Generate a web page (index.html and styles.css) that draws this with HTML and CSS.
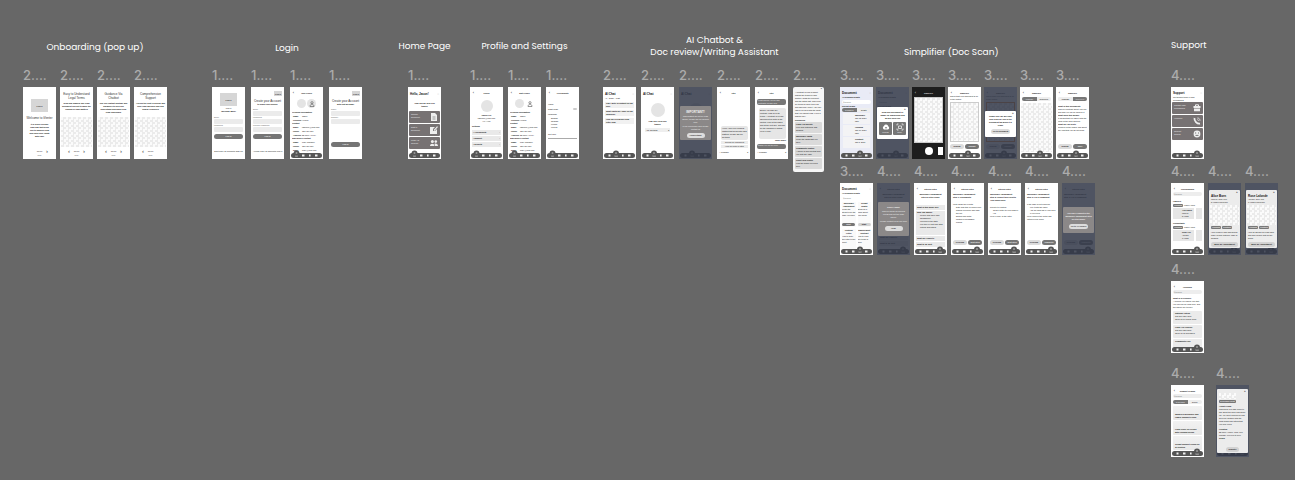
FILE: index.html
```html
<!DOCTYPE html>
<html lang="en">
<head>
<meta charset="utf-8">
<meta name="viewport" content="width=device-width, initial-scale=1">
<title>Wireframe board</title>
<link rel="stylesheet" href="styles.css">
</head>
<body>
<svg class="defs" aria-hidden="true">
  <symbol id="pill" viewBox="0 0 31 8"><rect y="3" width="31" height="5" rx="2.5" fill="#555"/><g fill="#eee"><rect x="4.5" y="4.5" width="2" height="2"/><rect x="11" y="4.5" width="2.5" height="2"/><rect x="18" y="4.5" width="1.6" height="2"/><rect x="24" y="4.5" width="2.5" height="2"/></g></symbol>
  <symbol id="tabs1" viewBox="0 0 31 8"><use href="#pill" width="31" height="8"/><circle cx="5.5" cy="3.5" r="3" fill="#555"/><circle cx="5.5" cy="3" r="1" fill="#999"/><path d="M4 6h3" stroke="#aaa" stroke-width=".7"/></symbol>
  <symbol id="tabs2" viewBox="0 0 31 8"><use href="#pill" width="31" height="8"/><circle cx="12" cy="3.5" r="3" fill="#555"/><circle cx="12" cy="3" r="1" fill="#999"/><path d="M10 6h4" stroke="#aaa" stroke-width=".7"/></symbol>
  <symbol id="tabs3" viewBox="0 0 31 8"><use href="#pill" width="31" height="8"/><circle cx="19" cy="3.5" r="3" fill="#555"/><circle cx="19" cy="3" r="1" fill="#999"/><path d="M17 6h4" stroke="#aaa" stroke-width=".7"/></symbol>
  <symbol id="tabs4" viewBox="0 0 31 8"><use href="#pill" width="31" height="8"/><circle cx="25" cy="3.5" r="3" fill="#555"/><circle cx="25" cy="3" r="1" fill="#999"/><path d="M23 6h4" stroke="#aaa" stroke-width=".7"/></symbol>
  <symbol id="doc" viewBox="0 0 8 8"><path d="M1 0h4l2 2v6H1z" fill="#eee"/><path d="M2.5 4h3M2.5 6h3" stroke="#777" stroke-width=".7"/></symbol>
  <symbol id="edit" viewBox="0 0 8 8"><path d="M0 1h5L3 3v2h2l2-2v5H0z" fill="#eee"/><path d="M4 4.5 7.5.7" stroke="#eee" stroke-width="1.2"/></symbol>
  <symbol id="people" viewBox="0 0 8 8"><g fill="#eee"><circle cx="2.4" cy="2.6" r="1.5"/><circle cx="5.8" cy="2.6" r="1.3"/><path d="M0 7c0-3 4.5-3 4.5 0zM5 7c0-1-.3-1.6-.7-2C6 4 8 5 8 7z"/></g></symbol>
  <symbol id="case" viewBox="0 0 8 8"><path d="M2.5 2V.8h3V2" fill="none" stroke="#eee"/><path d="M.5 2h7v2h-7zM1 4.6h6v2.6H1z" fill="#eee"/></symbol>
  <symbol id="phone" viewBox="0 0 8 8"><path d="M1.5 1C1 4 4 7 7 6.6" fill="none" stroke="#eee" stroke-width="1.8"/><path d="M4.3 1C6 1 7 2 7 3.8M4.3 2.6c.8 0 1.2.5 1.2 1.2" fill="none" stroke="#eee" stroke-width=".8"/></symbol>
  <symbol id="globe" viewBox="0 0 8 8"><circle cx="4" cy="4" r="3.4" fill="#eee"/><path d="M2 3h1.2M5 3h1M2.5 5.4h3" stroke="#777"/></symbol>
  <symbol id="cloud" viewBox="0 0 8 8"><path d="M2 6.5a2 2 0 0 1 0-3.6 2.2 2.2 0 0 1 4.2.3A1.8 1.8 0 0 1 6 6.5z" fill="#fff"/><path d="M4 6V4M3 5l1-1 1 1" stroke="#777" stroke-width=".6" fill="none"/></symbol>
  <symbol id="scan" viewBox="0 0 8 8"><path d="M1 2.5V1h1.5M5.5 1H7v1.5M7 5.5V7H5.5M2.5 7H1V5.5M2.5 3h3v2.5h-3z" fill="none" stroke="#eee" stroke-width=".8"/></symbol>
  <symbol id="user" viewBox="0 0 6 6"><circle cx="3" cy="1.7" r="1.1" fill="none" stroke="#555" stroke-width=".6"/><path d="M1 5.5c0-3 4-3 4 0z" fill="none" stroke="#555" stroke-width=".6"/></symbol>
</svg>

<main class="canvas">

<section class="flow onboarding">
  <h2>Onboarding (pop up)</h2>
  <div class="row gap4">
    <article class="node"><h3>2....</h3><div class="shot">
      <div class="logo big mt12">LOGO</div><p class="h thin c mt4 nowrap">Welcome to iVenter</p>
      <p class="t b c mt3 inset">It is a user friendly legal app that helps you to simplify legal and learn your rights with ease</p>
      <p class="pager"><span></span><span>••••</span><span>›</span></p><p class="t c grey">Skip</p></div></article>
    <article class="node"><h3>2....</h3><div class="shot">
      <p class="h thin c mt5">Easy to Understand Legal Terms</p><p class="t b c mt2">Scan and simplify any legal document you get to make the reading of legal matters</p>
      <div class="check h30 bottom"></div><p class="pager tight"><span>‹</span><span>••••</span><span>›</span></p><p class="t c grey">Skip</p></div></article>
    <article class="node"><h3>2....</h3><div class="shot">
      <p class="h thin c mt5">Guidance Via<br>Chatbot</p><p class="t b c mt2">Use our chatbot anytime and anywhere to help you understand and guide your legal challenges</p>
      <div class="check h30 bottom"></div><p class="pager tight"><span>‹</span><span>••••</span><span>›</span></p><p class="t c grey">Skip</p></div></article>
    <article class="node"><h3>2....</h3><div class="shot">
      <p class="h thin c mt5">Comprehensive Support</p><p class="t b c mt2">Access the best in person and your legal advisors and find nearby resources</p>
      <div class="check h30 bottom"></div><p class="pager tight"><span>‹</span><span>••••</span><span></span></p><p class="t c grey">Skip</p></div></article>
  </div>
</section>

<section class="flow login">
  <h2>Login</h2>
  <div class="row gap6">
    <article class="node"><h3>1....</h3><div class="shot">
      <div class="logo big mt6">LOGO</div><p class="t c mt1">Log In</p><p class="t c b">Welcome Back!</p>
      <label class="t grey mt3">Email<input class="field" type="text"></label><label class="t grey">Password<input class="field" type="password"></label>
      <button class="btn dark wide mt2">Log In</button><p class="t c nowrap bottom mb6">Don't have an account? Sign Up</p></div></article>
    <article class="node"><h3>1....</h3><div class="shot">
      <div class="logo small mt4">LOGO</div><p class="h thin c mt3 nowrap">Create your Account</p><p class="t c b">to begin your journey</p>
      <label class="t grey mt2">Email<input class="field" type="text"></label><label class="t grey">Password<input class="field" type="password"></label><label class="t grey">Confirm Password<input class="field" type="password"></label>
      <button class="btn dark wide mt2">Log In</button><p class="t c nowrap bottom mb6">Already have an account? Log In</p></div></article>
    <article class="node"><h3>1....</h3><div class="shot">
      <p class="bar"><span>‹</span><b>Your Profile</b></p>
      <div class="avatars"><i class="disc"></i><i class="disc"><svg class="ic6"><use href="#user"/></svg></i></div>
      <dl class="info"><dt>Personal Information</dt><dd><b>Name</b>Jason</dd><dd><b>Pronoun</b>He/him</dd><dt>Contact</dt><dd><b>Email</b>jasonlee@mail.com</dd><dd><b>Phone</b>123-456-789</dd><dd><b>Address</b>22 Park Ave NY</dd><dt>Emergency Contact</dt><dd><b>Name</b>Mary Johnson</dd><dd><b>Phone</b>123-456-789</dd><dd><b>Email</b>mary@mail.com</dd></dl>
      <svg class="tabs"><use href="#tabs1"/></svg></div></article>
    <article class="node"><h3>1....</h3><div class="shot">
      <div class="logo small mt4">LOGO</div><p class="h thin c mt3 nowrap">Create your Account</p><p class="t c b">with just an Email</p>
      <label class="t grey mt2">Name<input class="field" type="text"></label><label class="t grey">Number<input class="field" type="text"></label>
      <button class="btn dark wide mt18">Log In</button></div></article>
  </div>
</section>

<section class="flow home">
  <h2>Home Page</h2>
  <div class="row">
    <article class="node"><h3>1....</h3><div class="shot">
      <p class="top"><b>Hello, Jason!</b><span>○</span></p><p class="t c b mt5 inset">How can we help you today?</p>
      <div class="tiles"><button class="tile"><span>Simplify<br>document</span><svg class="ic8"><use href="#doc"/></svg></button><button class="tile"><span>Draft a<br>document</span><svg class="ic8"><use href="#edit"/></svg></button><button class="tile"><span>Legal Aid<br>Support</span><svg class="ic8"><use href="#people"/></svg></button></div>
      <svg class="tabs"><use href="#tabs1"/></svg></div></article>
  </div>
</section>

<section class="flow profile">
  <h2>Profile and Settings</h2>
  <div class="row gap5">
    <article class="node"><h3>1....</h3><div class="shot">
      <p class="bar"><span>‹</span><b>Profile</b></p><i class="disc large mt5"></i><p class="t c b mt2">Jason Lee</p><p class="t c">jasonlee@mail.com<br>He / Him</p>
      <p class="t b mt2">Settings</p><button class="item mt2">▪ Accessibility<span>›</span></button><button class="item">▪ Support<span>›</span></button><button class="item">▪ Security<span>›</span></button>
      <svg class="tabs"><use href="#tabs1"/></svg></div></article>
    <article class="node"><h3>1....</h3><div class="shot">
      <p class="bar"><span>‹</span><b>Edit Profile</b></p>
      <div class="avatars"><i class="disc"></i><i class="disc clear"><svg class="ic6"><use href="#user"/></svg></i></div>
      <dl class="info"><dt>Personal Information</dt><dd><b>Name</b>Jason</dd><dd><b>Pronoun</b>He/him</dd><dt>Contact</dt><dd><b>Email</b>jasonlee@mail.com</dd><dd><b>Phone</b>123-456-789</dd><dd><b>Address</b>22 Park Ave NY</dd><dt>Emergency Contact</dt><dd><b>Name</b>Mary Johnson</dd><dd><b>Phone</b>123-456-789</dd><dd><b>Email</b>mary@mail.com</dd></dl>
      <svg class="tabs"><use href="#tabs1"/></svg></div></article>
    <article class="node"><h3>1....</h3><div class="shot">
      <p class="bar"><span>‹</span><b>Accessibility</b></p><p class="t mt8">Visual</p><p class="t split mt2">Night mode<i class="toggle"></i></p>
      <p class="t mt2">Language</p><ul class="t list mt1"><li>English</li><li>Spanish</li><li>French</li><li>Korean</li></ul><p class="t mt4">Text Size</p><i class="slide"></i>
      <svg class="tabs"><use href="#tabs1"/></svg></div></article>
  </div>
</section>

<section class="flow chat">
  <h2>AI Chatbot &amp;<br>Doc review/Writing Assistant</h2>
  <div class="row gap5">
    <article class="node"><h3>2....</h3><div class="shot">
      <p class="top"><b>AI Chat</b><span>○</span></p><p class="t nowrap">All&nbsp;&nbsp; Today &nbsp; Past</p>
      <div class="stack mt2"><p class="note">Can I write a contract for my job?</p><p class="note">What rights do I have for my landlord?</p><p class="note">Help me review my legal letter now</p></div>
      <svg class="tabs"><use href="#tabs2"/></svg></div></article>
    <article class="node"><h3>2....</h3><div class="shot">
      <p class="top"><b>AI Chat</b><span>○</span></p><i class="disc huge mt6"></i><p class="t c b mt3 inset">How can I help you today?</p><p class="ask mt2">Ask anything<span>◂</span></p>
      <svg class="tabs"><use href="#tabs2"/></svg></div></article>
    <article class="node"><h3>2....</h3><div class="shot dim">
      <p class="top"><b>AI Chat</b><span>○</span></p><i class="disc huge mt6"></i>
      <svg class="tabs"><use href="#tabs2"/></svg>
      <div class="modal grey-modal m34"><p class="h c">IMPORTANT!</p><p class="t c mt1">This chatbot will not be legal advice, please use for general help</p><p class="t c mt1">If you need more help please contact us</p><button class="btn pale mt2">I understand</button></div></div></article>
    <article class="node"><h3>2....</h3><div class="shot">
      <p class="bar"><span>‹</span><b>Title</b></p>
      <div class="bubble bottom">Hello! I am your personal chatbot that helps with legal matters. Please ask me anything</div><p class="hint">Review my document</p><p class="hint">Help me write a letter</p>
      <p class="send"><span>+ Message</span><span>◂</span></p></div></article>
    <article class="node"><h3>2....</h3><div class="shot">
      <p class="bar"><span>‹</span><b>Title</b></p><p class="said mt4">What should I do for this contract? Please help</p>
      <div class="bubble h31 mt3">Before you sign any contract, read all of its terms. A contract is a legal agreement for both of the parties. Look at the dates and at the rent due, and ask for the changes in writing. Keep a copy</div>
      <p class="t r b">Copy Share</p><p class="said mt2">Thank you for the help</p><p class="send bottom"><span>+ Message</span><span>◂</span></p></div></article>
    <article class="node"><h3>2....</h3><div class="shot tall">
      <p class="t r b">●</p><p class="t mt1">A contract review is about finding the terms of each section. Read the payment and the dates first. Then look for terms on how it will end, and who may end it. Ask your lawyer for help with the parts that you cannot read. Keep a signed copy</p>
      <p class="t b mt1">Resources</p><div class="stack tight-stack"><p class="card"><b>Legal Aid Society</b><br>Free help with work and housing</p><p class="card"><b>Workplace rights</b><br>Learn the rights that you have</p><p class="card"><b>Community Justice</b><br>A group of lawyers that help you with any case</p><p class="card"><b>Court Help Center</b><br>Find the forms you need here</p></div></div></article>
  </div>
</section>

<section class="flow simplifier">
  <h2>Simplifier (Doc Scan)</h2>
  <div class="row gap3">
    <article class="node"><h3>3....</h3><div class="shot blue">
      <p class="top low"><b>Document</b><span>○</span></p><p class="t b nowrap">All Scanned Drafts</p><p class="search">⚲ Search</p><p class="t b">Recent Scans</p><p class="seg"><b>Scanned</b><span>Drafts</span></p>
      <div class="stack files"><p class="file"><b>Workplace</b><br>Jan 12, 2024<br>PDF</p><p class="file"><b>Housing</b><br>Jan 10, 2024<br>PDF</p><p class="file"><b>Contract</b><br>Jan 8, 2024</p></div>
      <svg class="tabs"><use href="#tabs3"/></svg></div></article>
    <article class="node"><h3>3....</h3><div class="shot dim">
      <p class="top low"><b>Document</b><span>○</span></p><p class="t b nowrap">All Scanned Drafts</p><p class="search">⚲ Search</p><p class="t b">Recent Scans</p>
      <svg class="tabs"><use href="#tabs3"/></svg>
      <div class="modal m32"><p class="t r">⊗</p><p class="t c b">Scan any document or image for simplifying and we will help you</p><div class="pair"><button class="pick"><svg class="ic8"><use href="#cloud"/></svg>Upload</button><button class="pick"><svg class="ic8"><use href="#scan"/></svg>Scan</button></div></div></div></article>
    <article class="node"><h3>3....</h3><div class="shot camera">
      <p class="bar"><span>‹</span><b>Simplifier</b></p><div class="check framed h46 mt2"></div><div class="shutter"><i></i><i class="round"></i><i class="thumb"></i></div></div></article>
    <article class="node"><h3>3....</h3><div class="shot">
      <p class="bar"><span>‹</span><b>Simplifier</b></p><p class="t">Check that your document is all in the picture</p><div class="check framed h40 mt1"></div><div class="pair mt2"><button class="btn light">Rescan</button><button class="btn dark">Submit</button></div>
      <svg class="tabs"><use href="#tabs3"/></svg></div></article>
    <article class="node"><h3>3....</h3><div class="shot dim">
      <p class="bar"><span>‹</span><b>Simplifier</b></p><p class="t">Check that your document is all in the picture</p><div class="check framed orange h40 mt1"></div><div class="pair mt2"><button class="btn light">Rescan</button><button class="btn dark">Submit</button></div>
      <svg class="tabs"><use href="#tabs3"/></svg>
      <div class="modal m26"><p class="t r">⊗</p><p class="t c b">Thank you! We will save your scan for you in the Document tab when it is ready</p><button class="btn light mt2">Go to Document</button></div></div></article>
    <article class="node"><h3>3....</h3><div class="shot">
      <p class="bar"><span>‹</span><b>Simplifier</b></p><p class="seg mt2"><b>Original</b><span>Simplified</span></p><div class="check h49 mt2"></div>
      <svg class="tabs"><use href="#tabs3"/></svg></div></article>
    <article class="node"><h3>3....</h3><div class="shot">
      <p class="bar"><span>‹</span><b>Simplifier</b></p><p class="seg flip mt2"><b>Original</b><span>Simplified</span></p>
      <div class="t text-body mt4"><b>What is this document?</b><br>This is a contract about your job and how you will be paid for it.<br><b>What does this mean?</b><br>It means that you agree with the rules of the work and pay.<br><b>What do I do next?</b><br>Read all of the pages, ask about any part that you do not know</div><div class="pair foot"><button class="btn light">Rescan</button><button class="btn dark">Save</button></div>
      <svg class="tabs"><use href="#tabs3"/></svg></div></article>
  </div>
  <div class="row gap4 second">
    <article class="node"><h3>3....</h3><div class="shot">
      <p class="top low"><b>Document</b><span>○</span></p><p class="t b nowrap">All Scanned Drafts</p><p class="search">⚲ Search</p>
      <div class="grid"><div class="t c"><b>Workplace Harassment</b><p class="l">Learn the steps to file the case you have</p><button class="btn dark mini">Start</button></div><div class="t c"><b>Tenant<br>Rights</b><p class="l">Steps for a claim about your home</p><button class="btn mid mini">Start</button></div><div class="t c"><b>Custody<br>Letter</b><p class="l">How to write the letter to the court</p></div><div class="t c"><b>Employment Contract</b><p class="l">How to read the terms of work</p></div></div>
      <svg class="tabs"><use href="#tabs3"/></svg></div></article>
    <article class="node"><h3>4....</h3><div class="shot dim">
      <p class="bar"><span>‹</span><b>Step-by-Step</b></p><p class="t b c mt2">Workplace Harassment<br>Step by Step Guide</p><p class="item mt36">What do I expect?</p><p class="item">What to do next</p>
      <svg class="tabs"><use href="#tabs4"/></svg>
      <div class="modal grey-modal m34"><p class="t b c mt3">DISCLAIMER</p><p class="t c mt1">This is a guide for general needs and not the legal advice</p><p class="t c mt1">Please contact us for any help</p><button class="btn pale mt3">Okay</button></div></div></article>
    <article class="node"><h3>4....</h3><div class="shot">
      <p class="bar"><span>‹</span><b>Step-by-Step</b></p><p class="t b c mt2">Workplace Harassment<br>Step by Step Guide</p><p class="item mt6">What is this guide for?</p>
      <div class="panel t"><b>Who can apply?</b><ul class="list"><li>People who have had harassment</li><li>Workers in the state</li><li>Full time or part time staff</li><li>Interns and others</li></ul></div><p class="item">What do I expect?</p><p class="item">What to do next</p>
      <svg class="tabs"><use href="#tabs4"/></svg></div></article>
    <article class="node"><h3>4....</h3><div class="shot">
      <p class="bar"><span>‹</span><b>Step-by-Step</b></p><p class="t b mt2">Workplace Harassment<br>Step 1: Documents</p><div class="t mt4">Write down the events:<ul class="list"><li>Date and time of each event</li><li>Names of people who saw the act</li><li>Emails and notes</li><li>Photos or messages</li><li>Places</li></ul></div><div class="pair foot"><button class="btn light">Previous</button><button class="btn dark">Next Step</button></div>
      <svg class="tabs"><use href="#tabs4"/></svg></div></article>
    <article class="node"><h3>4....</h3><div class="shot">
      <p class="bar"><span>‹</span><b>Step-by-Step</b></p><p class="t b mt2">Workplace Harassment<br>Step 2: Report this event to Your Supervisor</p><div class="t mt4">Report it in writing:<ul class="list"><li>Send a letter to your boss or HR</li></ul>Keep a copy of the letter</div><div class="pair foot"><button class="btn light">Previous</button><button class="btn dark">Next Step</button></div>
      <svg class="tabs"><use href="#tabs4"/></svg></div></article>
    <article class="node"><h3>4....</h3><div class="shot">
      <p class="bar"><span>‹</span><b>Step-by-Step</b></p><p class="t b mt2">Workplace Harassment<br>Step 3: File a complaint</p><div class="t mt4">If the case is not resolved:<ul class="list"><li>File it with the office</li><li>Ask for legal aid in your area if you need</li></ul>Keep each of the notes and letters in one place</div><div class="pair foot"><button class="btn light">Previous</button><button class="btn dark">Complete</button></div>
      <svg class="tabs"><use href="#tabs4"/></svg></div></article>
    <article class="node"><h3>4....</h3><div class="shot dim">
      <p class="bar"><span>‹</span><b>Step-by-Step</b></p><p class="t b mt2">Workplace Harassment<br>Step 3: File a complaint</p><div class="pair foot"><button class="btn light">Previous</button><button class="btn dark">Complete</button></div>
      <svg class="tabs"><use href="#tabs4"/></svg>
      <div class="modal grey-modal m26"><p class="t c b mt4">You have completed the workplace harassment step by step guide!</p><button class="btn pale mt3">Go to All Guides</button></div></div></article>
  </div>
</section>

<section class="flow support">
  <h2>Support</h2>
  <div class="row">
    <article class="node"><h3>4....</h3><div class="shot">
      <p class="top low"><b>Support</b><span>○</span></p><p class="t">Get support from a legal professional</p>
      <div class="tiles close"><button class="tile"><span>Contact legal<br>Professional</span><svg class="ic8"><use href="#case"/></svg></button><button class="tile"><span>Helplines</span><svg class="ic8"><use href="#phone"/></svg></button><button class="tile"><span>Support<br>Groups</span><svg class="ic8"><use href="#globe"/></svg></button></div>
      <svg class="tabs"><use href="#tabs4"/></svg></div></article>
  </div>
  <div class="row gap4 second">
    <article class="node"><h3>4....</h3><div class="shot">
      <p class="bar"><span>‹</span><b>Professionals</b></p><p class="search line mt1">⚲ Search</p><p class="t b mt3">Lawyers</p><p class="chips"><b>Housing</b><span>Family Work</span></p><div class="scroll"><p class="pro"><b>Alice Born</b><br>Lawyer<br>5 years</p><p class="pro"></p></div>
      <p class="t b mt3">Consultants</p><p class="chips"><b>Housing</b><span>Family Work</span></p><div class="scroll"><p class="pro"><b>Rose Lee</b><br>Adviser<br>3 years</p><p class="pro"></p></div>
      <svg class="tabs"><use href="#tabs4"/></svg></div></article>
    <article class="node"><h3>4....</h3><div class="shot dim"><svg class="tabs"><use href="#tabs4"/></svg>
      <div class="modal m58 sheet"><p class="t r">⊗</p><p class="h">Alice Born</p><p class="t">Lawyer, New York<br>5 years experience</p><div class="check h20 mt1"></div><p class="chips"><b>Housing</b><b>Contract</b></p><p class="t mt2">I am a lawyer who has helped many people with any case of housing</p><button class="btn mid wide bottom">Book an Appointment</button></div></div></article>
    <article class="node"><h3>4....</h3><div class="shot dim"><svg class="tabs"><use href="#tabs4"/></svg>
      <div class="modal m58 sheet"><p class="t r">⊗</p><p class="h">Rose Lalonde</p><p class="t">Adviser, New York<br>3 years experience</p><div class="check h20 mt1"></div><p class="chips"><b>Housing</b><b>Contract</b></p><p class="t mt2">I am an adviser for legal work and help people with all the forms</p><button class="btn mid wide bottom">Book an Appointment</button></div></div></article>
  </div>
  <div class="row third">
    <article class="node"><h3>4....</h3><div class="shot">
      <p class="bar"><span>‹</span><b>Helplines</b></p><p class="search line mt1">⚲ Search</p><p class="t b mt2">What is a Helpline?</p><p class="t">A helpline is a phone line that you can call for legal help, and the advice for it is free</p>
      <div class="stack lines"><p class="card lite"><b>National Hotline</b><br>Call 800-123-4567<br>Open for 24 hours a day</p><p class="card lite"><b>Legal Aid Helpline</b><br>Call 800-123-9876<br>Open on all weekdays</p><p class="card lite"><b>Community Line</b></p></div>
      <svg class="tabs"><use href="#tabs4"/></svg></div></article>
  </div>
  <div class="row gap12 fourth">
    <article class="node"><h3>4....</h3><div class="shot">
      <p class="bar"><span>‹</span><b>Support Groups</b></p><p class="search line mt1">⚲ Search</p><p class="seg mt1"><b>In person</b><span>Online</span></p>
      <div class="stack lines"><p class="card lite meet">Women's Workplace and Family Support Group</p><p class="card lite meet">Legal Clinic for People with Housing Needs</p><p class="card lite meet">Tenant Support Group for all Renters</p></div>
      <svg class="tabs"><use href="#tabs4"/></svg></div></article>
    <article class="node"><h3>4....</h3><div class="shot dim"><svg class="tabs"><use href="#tabs4"/></svg>
      <div class="modal m64 sheet"><p class="t r">⊗</p><div class="check h6 half"></div><p class="chips"><b>In person event</b></p><p class="t mt2"><b>About Group</b><br>This group is a safe place to talk about the work and home life. We meet each week and help one another with the legal forms and letters that you may need</p><p class="t mt2"><b>Location</b><br>22 Park Avenue, New York<br>Monday 6:00 PM to 8:00<br><b>●●●●●</b></p><button class="btn mid bottom">Register</button></div></div></article>
  </div>
</section>

</main>
</body>
</html>
```
FILE: styles.css
```css
* { box-sizing: border-box; }
body { margin: 0; background: #676767; font-family: "Liberation Sans", sans-serif; }
h2, h3, p, ul, dl, dd { margin: 0; padding: 0; }
button, input { font: inherit; color: inherit; border: 0; padding: 0; margin: 0; }
.defs { position: absolute; width: 0; height: 0; }

/* Board: every flow is a node placed on a free canvas. */
.canvas { position: relative; min-height: 100vh; overflow: hidden; }
.flow { position: absolute; display: flex; flex-direction: column; align-items: center; }
.onboarding { left: 23px; top: 41px; }
.login { left: 212px; top: 42px; }
.home { left: 408px; top: 40px; }
.profile { left: 470px; top: 40px; }
.chat { left: 603px; top: 34px; }
.simplifier { left: 840px; top: 46px; }
.support { left: 1171px; top: 39px; align-items: flex-start; }

h2 { font: 400 9px/12px Poppins, Inter, sans-serif; color: #fff; text-align: center; white-space: nowrap; }
.row { display: flex; align-items: flex-start; margin-top: 13px; }
.login .row { margin-top: 12px; }
.home .row, .profile .row { margin-top: 14px; }
.support .row { margin-top: 15px; }
.chat .row { margin-top: 8px; }
.simplifier .row { margin-top: 8px; }
.gap3 { gap: 3px; }
.gap4 { gap: 4px; }
.gap5 { gap: 5px; }
.gap6 { gap: 6px; }
.gap12 { gap: 12px; }
.home { width: 33px; }
.simplifier { align-items: flex-start; }
.simplifier h2 { padding-left: 64px; }
.simplifier .second { margin-top: 3px; }
.support .second { margin-top: 3px; }
.support .third { margin-top: 5px; }
.support .fourth { margin-top: 11px; }

h3 { height: 21px; font: 500 13px/18px Inter, sans-serif; color: #acacac; white-space: nowrap; }
.node { width: 33px; }
.shot { position: relative; display: flex; flex-direction: column; height: 72px; padding: 0 2px; overflow: hidden; background: #fff; color: #111; }
.shot > *, .modal > * { flex-shrink: 0; }
.tall { width: 31px; height: 85px; background: #f6f6f6; border-radius: 2px; }
.blue { background: #e9ebf6; }
.camera { background: #1d1d1d; color: #ddd; }
.dim::before { content: ""; position: absolute; inset: 0; z-index: 1; background: rgba(50, 56, 72, .86); }

/* Thumbnail type */
.t { font-size: 2px; line-height: 3px; display: block; }
.h { font-size: 3px; line-height: 4px; font-weight: 700; }
.thin { font-weight: 400; color: #333; }
.b { font-weight: 700; }
.c { text-align: center; }
.r { text-align: right; }
.l { text-align: left; }
.grey { color: #666; }
.nowrap { white-space: nowrap; }
.inset { padding: 0 4px; }
.mt1 { margin-top: 1px; }
.mt2 { margin-top: 2px; }
.mt3 { margin-top: 3px; }
.mt4 { margin-top: 4px; }
.mt5 { margin-top: 5px; }
.mt6 { margin-top: 6px; }
.mt8 { margin-top: 8px; }
.mt12 { margin-top: 12px; }
.mt18 { margin-top: 18px; }
.mt36 { margin-top: 36px; }
.mb6 { margin-bottom: 6px; }
.bottom { margin-top: auto; }

/* Thumbnail parts */
.tabs { position: absolute; left: 1px; bottom: 1px; width: 31px; height: 8px; }
.ic6 { width: 6px; height: 6px; }
.ic8 { width: 8px; height: 8px; flex: none; }
.logo { display: flex; align-items: center; justify-content: center; background: #d6d6d6; font-size: 2px; font-weight: 700; }
.big { align-self: center; width: 17px; height: 13px; }
.small { align-self: flex-end; width: 8px; height: 5px; }
.check { background: repeating-conic-gradient(#ebebeb 0 25%, #fbfbfb 0 50%) 0 0 / 5px 5px; margin-left: -1px; margin-right: -1px; }
.h6 { height: 6px; }
.h20 { height: 20px; }
.h30 { height: 30px; }
.h40 { height: 40px; }
.h46 { height: 46px; }
.h49 { height: 49px; }
.half { width: 17px; margin: 0; }
.framed { margin-left: 0; margin-right: 0; border: 1px solid #ccc; }
.orange { border-color: #e08a3c; }
.pager { display: grid; grid-template-columns: 6px 9px 6px; justify-content: center; margin-top: auto; font-size: 6px; line-height: 5px; text-align: center; color: #333; }
.pager span:nth-child(2) { font-size: 4px; color: #888; }
.pager + .t { margin-bottom: 2px; }
.tight { margin-top: 2px; }
.field { display: block; width: 100%; height: 5px; background: #ebebeb; border-radius: 1px; }
.btn { align-self: center; height: 5px; min-width: 12px; padding: 0 2px; border-radius: 3px; font-size: 2px; line-height: 5px; font-weight: 700; white-space: nowrap; text-align: center; }
.dark { background: #757575; color: #eee; }
.light { background: #dcdcdc; color: #222; }
.mid { background: #d2d2d2; color: #222; }
.pale { background: #ddd; color: #333; min-width: 18px; }
.wide { align-self: stretch; }
.mini { height: 3px; line-height: 3px; min-width: 13px; margin-top: 1px; display: block; }
.bar { position: relative; display: grid; grid-template-columns: 3px 1fr 3px; margin-top: 4px; font-size: 2px; line-height: 4px; text-align: center; }
.bar span { font-size: 4px; }
.top { display: flex; justify-content: space-between; margin: 5px 0 0; font-size: 3px; line-height: 5px; white-space: nowrap; }
.top span { color: #bbb; }
.low { margin-top: 4px; }
.avatars { display: flex; justify-content: center; gap: 1px; margin: 4px 0 3px; }
.disc { display: flex; align-items: center; justify-content: center; width: 9px; height: 9px; border-radius: 50%; background: #e4e4e4; }
.clear { background: none; }
.large { align-self: center; width: 12px; height: 12px; }
.huge { align-self: center; width: 14px; height: 14px; }
.info { font-size: 2px; white-space: nowrap; overflow: hidden; }
.info dt { line-height: 3px; font-weight: 700; }
.info dd { display: grid; grid-template-columns: 9px 1fr; line-height: 4px; padding-left: 1px; }
.tiles { display: flex; flex-direction: column; gap: 1px; margin: 3px -1px 0; }
.close { margin-top: 0; }
.tile { display: flex; justify-content: space-between; align-items: center; height: 12px; padding: 0 2px; background: #777273; color: #eee; border-radius: 1px; font-size: 2px; line-height: 3px; text-align: left; }
.tile span { align-self: flex-start; margin-top: 2px; }
.item { display: flex; justify-content: space-between; height: 5px; padding: 0 1px; margin-bottom: 1px; background: #e9e9e9; font-size: 2px; line-height: 5px; font-weight: 700; white-space: nowrap; }
.split { display: flex; justify-content: space-between; }
.toggle { width: 4px; height: 2px; border-radius: 1px; background: #ccc; }
.slide { height: 1px; margin-top: 2px; background: #aaa; }
.list { list-style: none; padding-left: 3px; }
.stack { display: flex; flex-direction: column; gap: 2px; }
.note { height: 6px; padding: 0 1px; background: #f1f1f1; font-size: 2px; line-height: 3px; font-weight: 600; }
.ask { display: flex; justify-content: space-between; margin-left: 2px; margin-right: 2px; padding: 0 1px; background: #eee; font-size: 2px; line-height: 4px; }
.bubble { margin-left: 2px; padding: 1px; background: #e6e6e6; border-radius: 2px; font-size: 2px; line-height: 3px; }
.h31 { min-height: 31px; }
.hint { margin: 1px 0 0 2px; background: #ececec; font-size: 2px; line-height: 3px; text-align: center; }
.said { margin-left: 0; padding: 0 1px; min-height: 5px; background: #777; color: #eee; border-radius: 2px; font-size: 2px; line-height: 3px; }
.send { display: flex; justify-content: space-between; margin: 2px 0 5px; font-size: 2px; line-height: 4px; }
.send.bottom { margin-top: auto; }
.card { padding: 1px; background: #dadada; border-radius: 1px; font-size: 2px; line-height: 3px; min-height: 9px; }
.tight-stack { gap: 1px; }
.lite { background: #ebebeb; padding: 1px 2px; min-height: 13px; }
.lines { gap: 1px; margin-top: 2px; }
.meet { display: flex; align-items: flex-end; background: linear-gradient(#f2f2f2, #e8e8e8); min-height: 14px; font-weight: 700; }
.search { margin: 1px 0; padding: 0 1px; height: 4px; border-radius: 2px; background: #fff; font-size: 2px; line-height: 4px; color: #777; }
.line { background: #ededed; }
.seg { display: grid; grid-template-columns: 1fr 1fr; height: 4px; border-radius: 2px; overflow: hidden; background: #eee; font-size: 2px; line-height: 4px; text-align: center; }
.seg b { background: #777; color: #ddd; }
.flip b { background: #eee; color: #333; }
.flip span { background: #777; color: #ddd; }
.files { margin: 1px 1px 0; gap: 1px; }
.file { height: 11px; padding: 1px 0 0 12px; background: #f3f3f5; font-size: 2px; line-height: 3px; white-space: nowrap; }
.shutter { display: grid; grid-template-columns: 1fr 8px 1fr; align-items: center; height: 16px; }
.round { width: 8px; height: 8px; border-radius: 50%; background: #fff; }
.thumb { justify-self: end; width: 5px; height: 8px; background: #fff; }
.pair { display: flex; justify-content: space-between; gap: 1px; }
.pair .btn { min-width: 14px; padding: 0 1px; }
.foot { margin-top: auto; margin-bottom: 10px; }
.pick { display: flex; flex-direction: column; align-items: center; justify-content: center; width: 13px; height: 13px; background: #777; color: #eee; border-radius: 1px; font-size: 2px; line-height: 3px; }
.text-body { max-height: 36px; overflow: hidden; }
.grid { display: grid; grid-template-columns: 1fr 1fr; gap: 2px; margin-top: 1px; }
.grid > div { height: 25px; overflow: hidden; background: #fafafa; }
.grid .l { height: 14px; overflow: hidden; }
.panel { height: 24px; margin-bottom: 1px; padding: 0 1px; background: #e9e9e9; overflow: hidden; }
.chips { display: flex; gap: 1px; margin-top: 1px; font-size: 2px; line-height: 3px; white-space: nowrap; }
.chips b { padding: 0 1px; border-radius: 1px; background: #777; color: #eee; }
.scroll { display: flex; gap: 2px; margin-top: 1px; overflow: hidden; }
.pro { flex: none; width: 21px; height: 11px; padding: 1px 0 0 9px; background: #e6e6e6; font-size: 2px; line-height: 3px; }

/* Dialogs over dimmed screens */
.modal { position: absolute; z-index: 2; left: 1px; right: 1px; top: 19px; display: flex; flex-direction: column; padding: 1px 2px; background: #fff; border-radius: 1px; }
.grey-modal { background: #8b8888; color: #f2f2f2; }
.grey-modal .h { margin-top: 3px; }
.m26 { top: 24px; height: 26px; }
.m32 { top: 20px; height: 32px; }
.m34 { height: 34px; }
.m58 { top: 7px; height: 58px; }
.m64 { top: 4px; height: 64px; }
.sheet { background: #ececec; }
.m32 .pair { margin-top: 2px; }
```
